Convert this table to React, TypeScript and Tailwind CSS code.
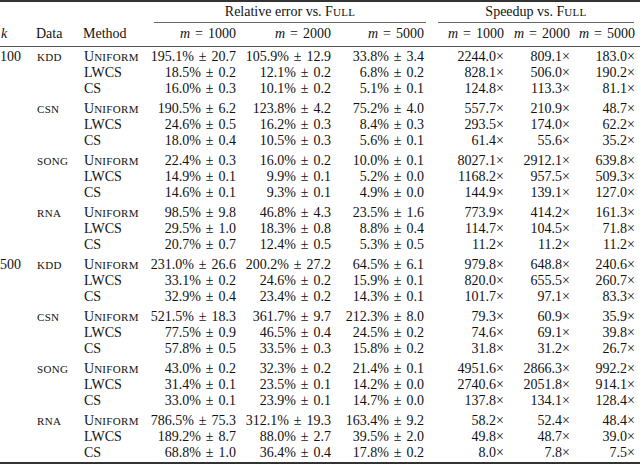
type Row = [string, string[], string[]];

type Group = { k?: string; data: string; rows: Row[] };

const groups: Group[] = [
  {
    k: "100",
    data: "kdd",
    rows: [
      ["Uniform", ["195.1 20.7", "105.9 12.9", "33.8 3.4"], ["2244.0", "809.1", "183.0"]],
      ["LWCS", ["18.5 0.2", "12.1 0.2", "6.8 0.2"], ["828.1", "506.0", "190.2"]],
      ["CS", ["16.0 0.3", "10.1 0.2", "5.1 0.1"], ["124.8", "113.3", "81.1"]],
    ],
  },
  {
    data: "csn",
    rows: [
      ["Uniform", ["190.5 6.2", "123.8 4.2", "75.2 4.0"], ["557.7", "210.9", "48.7"]],
      ["LWCS", ["24.6 0.5", "16.2 0.3", "8.4 0.3"], ["293.5", "174.0", "62.2"]],
      ["CS", ["18.0 0.4", "10.5 0.3", "5.6 0.1"], ["61.4", "55.6", "35.2"]],
    ],
  },
  {
    data: "song",
    rows: [
      ["Uniform", ["22.4 0.3", "16.0 0.2", "10.0 0.1"], ["8027.1", "2912.1", "639.8"]],
      ["LWCS", ["14.9 0.1", "9.9 0.1", "5.2 0.0"], ["1168.2", "957.5", "509.3"]],
      ["CS", ["14.6 0.1", "9.3 0.1", "4.9 0.0"], ["144.9", "139.1", "127.0"]],
    ],
  },
  {
    data: "rna",
    rows: [
      ["Uniform", ["98.5 9.8", "46.8 4.3", "23.5 1.6"], ["773.9", "414.2", "161.3"]],
      ["LWCS", ["29.5 1.0", "18.3 0.8", "8.8 0.4"], ["114.7", "104.5", "71.8"]],
      ["CS", ["20.7 0.7", "12.4 0.5", "5.3 0.5"], ["11.2", "11.2", "11.2"]],
    ],
  },
  {
    k: "500",
    data: "kdd",
    rows: [
      ["Uniform", ["231.0 26.6", "200.2 27.2", "64.5 6.1"], ["979.8", "648.8", "240.6"]],
      ["LWCS", ["33.1 0.2", "24.6 0.2", "15.9 0.1"], ["820.0", "655.5", "260.7"]],
      ["CS", ["32.9 0.4", "23.4 0.2", "14.3 0.1"], ["101.7", "97.1", "83.3"]],
    ],
  },
  {
    data: "csn",
    rows: [
      ["Uniform", ["521.5 18.3", "361.7 9.7", "212.3 8.0"], ["79.3", "60.9", "35.9"]],
      ["LWCS", ["77.5 0.9", "46.5 0.4", "24.5 0.2"], ["74.6", "69.1", "39.8"]],
      ["CS", ["57.8 0.5", "33.5 0.3", "15.8 0.2"], ["31.8", "31.2", "26.7"]],
    ],
  },
  {
    data: "song",
    rows: [
      ["Uniform", ["43.0 0.2", "32.3 0.2", "21.4 0.1"], ["4951.6", "2866.3", "992.2"]],
      ["LWCS", ["31.4 0.1", "23.5 0.1", "14.2 0.0"], ["2740.6", "2051.8", "914.1"]],
      ["CS", ["33.0 0.1", "23.9 0.1", "14.7 0.0"], ["137.8", "134.1", "128.4"]],
    ],
  },
  {
    data: "rna",
    rows: [
      ["Uniform", ["786.5 75.3", "312.1 19.3", "163.4 9.2"], ["58.2", "52.4", "48.4"]],
      ["LWCS", ["189.2 8.7", "88.0 2.7", "39.5 2.0"], ["49.8", "48.7", "39.0"]],
      ["CS", ["68.8 1.0", "36.4 0.4", "17.8 0.2"], ["8.0", "7.8", "7.5"]],
    ],
  },
];

const cols = "grid grid-cols-[36px_47px_64px_89px_95px_93px_80px_66px_65px]";

// small caps the way the LaTeX font draws them: capital first letter, the rest as smaller capitals
const SC = ({ text }: { text: string }) => {
  const first = text[0];
  const isCap = first === first.toUpperCase();
  return (
    <span className="whitespace-nowrap">
      {isCap && first}
      <span className="uppercase text-[11px] tracking-[0.3px]">{isCap ? text.slice(1) : text}</span>
    </span>
  );
};

const Em = ({ m }: { m: string }) => (
  <span className="whitespace-nowrap">
    <i>m</i>
    <span className="mx-[5px]">=</span>
    {m}
  </span>
);

const Err = ({ v }: { v: string }) => {
  const [mean, sd] = v.split(" ");
  return (
    <div className="text-right whitespace-nowrap">
      {mean}%<span className="mx-[5px]">±</span>
      {sd}
    </div>
  );
};

export default function App() {
  return (
    <div className="w-[640px] h-[464px] bg-white text-[#111] font-['Liberation_Serif',serif] text-[14px] leading-[16px]">
      <div className="border-t-2 border-[#333]" />

      {/* group headings */}
      <div className={cols}>
        <div className="col-span-3" />
        <div className="col-span-3 ml-[7px] -mr-[2px] pt-[2px] pb-[2px] border-b border-[#666] text-center">
          Relative error vs. <SC text="Full" />
        </div>
        <div className="col-span-3 ml-[14px] mr-px pt-[2px] pb-[2px] border-b border-[#666] text-center">
          Speedup vs. <SC text="Full" />
        </div>
      </div>

      {/* column headings */}
      <div className={`${cols} pt-[3px] pb-[4px] border-b border-[#555]`}>
        <div className="pl-px">
          <i>k</i>
        </div>
        <div>Data</div>
        <div>Method</div>
        {["1000", "2000", "5000"].map((m) => (
          <div key={"e" + m} className="text-right">
            <Em m={m} />
          </div>
        ))}
        {["1000", "2000", "5000"].map((m) => (
          <div key={"s" + m} className="text-right">
            <Em m={m} />
          </div>
        ))}
      </div>

      <div className="pt-[2px] pb-px flex flex-col gap-[4px] border-b-2 border-[#333]">
        {groups.map((g, gi) => (
          <div key={gi} className={cols}>
            {g.rows.map((r, ri) => (
              <div key={ri} className="contents">
                <div>{ri === 0 ? g.k : ""}</div>
                <div className="pl-px">{ri === 0 ? <SC text={g.data} /> : ""}</div>
                <div className="pl-px">
                  {r[0] === "Uniform" ? <SC text="Uniform" /> : r[0]}
                </div>
                {r[1].map((v, i) => (
                  <Err key={i} v={v} />
                ))}
                {r[2].map((v, i) => (
                  <div key={"s" + i} className="text-right whitespace-nowrap">
                    {v}×
                  </div>
                ))}
              </div>
            ))}
          </div>
        ))}
      </div>
    </div>
  );
}
